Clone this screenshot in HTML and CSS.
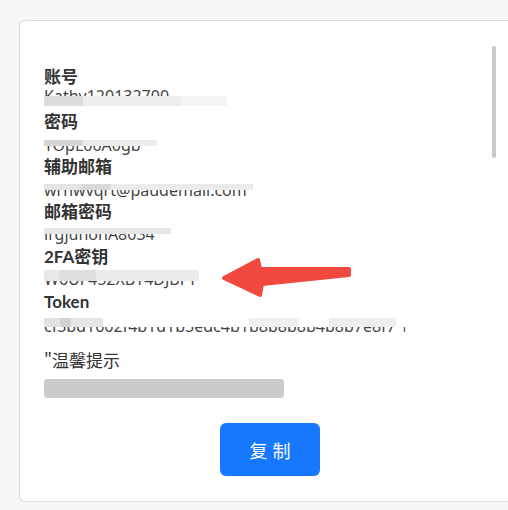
FILE: index.html
```html
<!DOCTYPE html>
<html lang="zh-CN">
<head>
<meta charset="utf-8">
<link rel="stylesheet" href="styles.css">
</head>
<body>
<div class="card">
  <div class="content">
    <div class="field">
      <div class="label">账号</div>
      <div class="value v1"><span class="txt">Kathy120132700</span><span class="mask m1"></span></div>
    </div>
    <div class="field">
      <div class="label">密码</div>
      <div class="value v2"><span class="txt">TOpL00A0gb</span><span class="mask m2"></span></div>
    </div>
    <div class="field">
      <div class="label">辅助邮箱</div>
      <div class="value v3"><span class="txt">wrhwvqrt@paudemail.com</span><span class="mask m3"></span></div>
    </div>
    <div class="field">
      <div class="label">邮箱密码</div>
      <div class="value v4"><span class="txt">lrgjuhohA8034</span><span class="mask m4"></span></div>
    </div>
    <div class="field">
      <div class="label">2FA密钥</div>
      <div class="value v5"><span class="txt">W6UF452XBT4DJBFY</span><span class="mask m5"></span></div>
    </div>
    <div class="field">
      <div class="label">Token</div>
      <div class="value v6"><span class="txt">cf3bd1662f4b1d1b5edc4b1b8b8b8b4b8b7e8f7 |</span><span class="mask m6"></span></div>
    </div>
    <div class="tip">"温馨提示</div>
    <div class="tip-bar"></div>
    <button class="copy">复制</button>
  </div>
  <div class="scrollbar"></div>
  <svg class="arrow" width="140" height="55" viewBox="0 0 140 55">
    <polygon points="9,28 43,10 45,19 134,19 134,25 47,34 45,45" fill="#f1483f" stroke="#f1483f" stroke-width="4" stroke-linejoin="round"/>
  </svg>
</div>
</body>
</html>
```
FILE: styles.css
```css
html, body {
  margin: 0;
  padding: 0;
}
body {
  width: 508px;
  height: 510px;
  overflow: hidden;
  background: #f7f7f7;
  font-family: "Noto Sans", "Noto Sans CJK SC", sans-serif;
  color: #333;
}
.card {
  position: relative;
  box-sizing: border-box;
  margin: 20px 0 0 19px;
  width: 489px;
  height: 482px;
  background: #fff;
  border: 1px solid #dedede;
  border-right: none;
  border-radius: 6px 0 0 6px;
  padding: 45px 0 0 24px;
}
.content {
  width: 452px;
  display: flex;
  flex-direction: column;
}
.label {
  font-family: "Lato", "Noto Sans CJK SC", sans-serif;
  font-weight: 700;
  font-size: 17px;
  line-height: 22px;
  color: #333;
}
.value {
  position: relative;
  height: 23px;
  overflow: hidden;
  font-size: 16px;
  color: #444;
  white-space: nowrap;
}
.txt {
  display: block;
  line-height: 16px;
}
.v1 .txt { margin-top: 0; }
.v2 .txt { margin-top: 4px; }
.v3 .txt { margin-top: 4px; }
.v4 .txt { margin-top: 3px; }
.v5 .txt { margin-top: 3px; }
.v6 .txt { margin-top: 5px; }
.v6 { height: 19px; margin-bottom: 4px; }
.mask {
  position: absolute;
  left: -3px;
}
.m1 {
  top: 8px;
  height: 15px;
  width: 186px;
  background:
    linear-gradient(to right, #dcdcdc 0 42px, #ededed 42px 140px, #f5f5f5 140px) top left / 100% 10px no-repeat,
    #fff;
}
.m2 {
  top: 0;
  height: 13px;
  width: 116px;
  background:
    linear-gradient(to right, #d6d6d6 0 42px, #ececec 42px) bottom left / 100% 6px no-repeat,
    #fff;
}
.m3 {
  top: 0;
  height: 12px;
  width: 212px;
  background:
    linear-gradient(to right, #e4e4e4 0 40px, #d9d9d9 40px 70px, #ebebeb 70px) bottom left / 100% 6px no-repeat,
    #fff;
}
.m4 {
  top: 0;
  height: 11px;
  width: 130px;
  background:
    linear-gradient(to right, #e6e6e6 0 130px) bottom left / 100% 6px no-repeat,
    #fff;
}
.m5 {
  top: 2px;
  height: 11px;
  width: 158px;
  background: linear-gradient(to right, #e8e8e8 0 18px, #dedede 18px 55px, #ebebeb 55px 158px);
}
.m6 {
  top: 0;
  height: 14px;
  width: 380px;
  background:
    linear-gradient(to right, #e2e2e2 0 19px, #d2d2d2 19px 30px, #e6e6e6 30px 62px, transparent 62px 208px, #f0f0f0 208px 258px, transparent 258px 288px, #eeeeee 288px 355px, transparent 355px) bottom left / 100% 9px no-repeat,
    #fff;
}
.tip {
  margin-top: 13px;
  font-size: 17px;
  line-height: 22px;
  color: #333;
  font-family: "Noto Sans CJK SC", sans-serif;
}
.tip-bar {
  margin-top: 8px;
  width: 240px;
  height: 19px;
  border-radius: 3px;
  background: #cbcbcb;
}
.copy {
  align-self: center;
  margin-top: 25px;
  width: 100px;
  height: 53px;
  border: none;
  border-radius: 6px;
  background: #1677ff;
  color: #fff;
  font-family: "Noto Sans CJK SC", sans-serif;
  font-size: 18px;
  letter-spacing: 5px;
  padding: 0 0 0 5px;
}
.scrollbar {
  position: absolute;
  left: 472px;
  top: 25px;
  width: 4px;
  height: 112px;
  border-radius: 2px;
  background: #c9c9c9;
}
.arrow {
  position: absolute;
  left: 195px;
  top: 229px;
}
```
